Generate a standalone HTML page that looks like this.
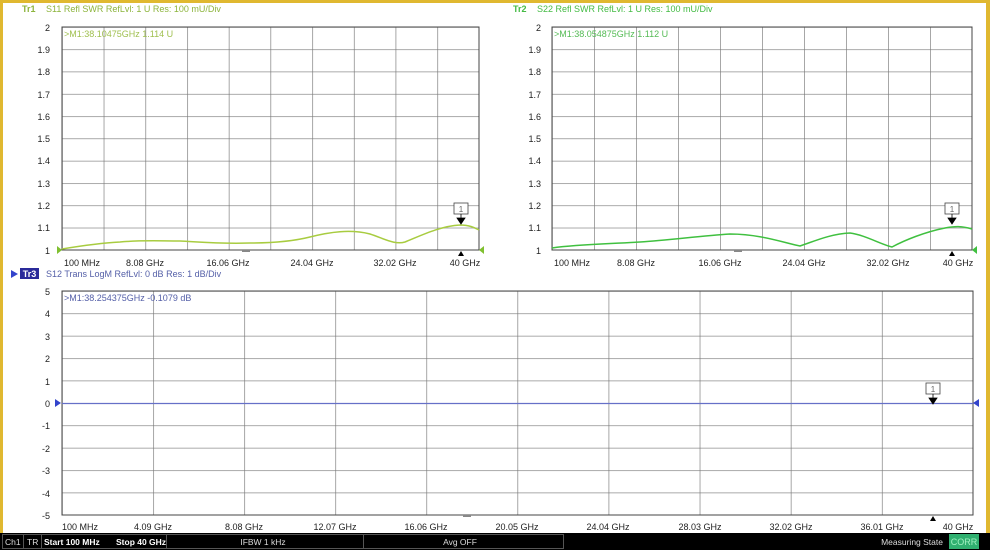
<!DOCTYPE html>
<html><head><meta charset="utf-8"><style>
body{margin:0;width:990px;height:550px;overflow:hidden;background:#fff;font-family:"Liberation Sans",sans-serif}
svg{display:block}
</style></head><body>
<svg width="990" height="550" xmlns="http://www.w3.org/2000/svg" font-family="Liberation Sans, sans-serif" font-size="9">
<defs>
<pattern id="g1" x="62" y="27" width="41.7" height="22.3" patternUnits="userSpaceOnUse"><path d="M0 0H41.7M0 0V22.3" stroke="#777" stroke-width="1.3" fill="none"/></pattern>
<pattern id="g2" x="552" y="27" width="42" height="22.3" patternUnits="userSpaceOnUse"><path d="M0 0H42M0 0V22.3" stroke="#777" stroke-width="1.3" fill="none"/></pattern>
<pattern id="g3" x="62" y="291" width="91.1" height="22.4" patternUnits="userSpaceOnUse"><path d="M0 0H91.1M0 0V22.4" stroke="#777" stroke-width="1.3" fill="none"/></pattern>
</defs>
<rect width="990" height="550" fill="#fff"/>
<rect x="0" y="0" width="990" height="3" fill="#e0b830"/>
<rect x="0" y="0" width="3" height="533" fill="#e0b830"/>
<rect x="986" y="0" width="4" height="533" fill="#e0b830"/>

<text x="22" y="12" fill="#8cb43c" font-weight="bold">Tr1</text>
<text x="46" y="12" fill="#8cb43c">S11 Refl SWR RefLvl: 1  U Res: 100 mU/Div</text>
<rect x="62" y="27" width="417" height="223" fill="url(#g1)" stroke="#444" stroke-width="1"/>
<text x="64" y="37" fill="#a0c050">&gt;M1:38.10475GHz  1.114  U</text>
<g fill="#222" text-anchor="end">
<text x="50" y="31">2</text><text x="50" y="53">1.9</text><text x="50" y="75">1.8</text><text x="50" y="98">1.7</text><text x="50" y="120">1.6</text><text x="50" y="142">1.5</text><text x="50" y="164">1.4</text><text x="50" y="187">1.3</text><text x="50" y="209">1.2</text><text x="50" y="231">1.1</text><text x="50" y="254">1</text>
</g>
<g fill="#222" text-anchor="middle">
<text x="82" y="266">100 MHz</text><text x="145" y="266">8.08 GHz</text><text x="228" y="266">16.06 GHz</text><text x="312" y="266">24.04 GHz</text><text x="395" y="266">32.02 GHz</text><text x="465" y="266">40 GHz</text>
</g>
<path d="M62 249 C80 246 100 243 120 242 C140 240 160 241 180 241 C200 242 220 244 250 243 C270 243 290 242 310 237 C330 232 350 229 370 234 C385 239 395 245 405 242 C420 236 440 226 460 225 C470 225 475 228 479 230" stroke="#a8cc40" stroke-width="1.5" fill="none"/>
<path d="M57 246 L62 250 L57 254 Z" fill="#80c030"/>
<path d="M484 246 L479 250 L484 254 Z" fill="#80c030"/>
<rect x="454" y="203" width="14" height="11" fill="#fff" stroke="#444" stroke-width="0.8"/><text x="461" y="212" text-anchor="middle" font-size="8" fill="#666">1</text>
<path d="M461 214V219M457 218H465L461 224Z" stroke="#000" fill="#000" stroke-width="0.8"/>
<path d="M458 256H464L461 251Z" fill="#000"/>
<rect x="242" y="250" width="8" height="2" fill="#888"/>

<text x="513" y="12" fill="#44bb44" font-weight="bold">Tr2</text>
<text x="537" y="12" fill="#44bb44">S22 Refl SWR RefLvl: 1  U Res: 100 mU/Div</text>
<rect x="552" y="27" width="420" height="223" fill="url(#g2)" stroke="#444" stroke-width="1"/>
<text x="554" y="37" fill="#55bb55">&gt;M1:38.054875GHz  1.112  U</text>
<g fill="#222" text-anchor="end">
<text x="541" y="31">2</text><text x="541" y="53">1.9</text><text x="541" y="75">1.8</text><text x="541" y="98">1.7</text><text x="541" y="120">1.6</text><text x="541" y="142">1.5</text><text x="541" y="164">1.4</text><text x="541" y="187">1.3</text><text x="541" y="209">1.2</text><text x="541" y="231">1.1</text><text x="541" y="254">1</text>
</g>
<g fill="#222" text-anchor="middle">
<text x="572" y="266">100 MHz</text><text x="636" y="266">8.08 GHz</text><text x="720" y="266">16.06 GHz</text><text x="804" y="266">24.04 GHz</text><text x="888" y="266">32.02 GHz</text><text x="958" y="266">40 GHz</text>
</g>
<path d="M552 248 C580 244 610 244 640 242 C670 240 700 236 730 234 C760 234 785 243 800 246 C815 241 830 234 850 233 C865 235 880 244 892 247 C905 240 925 232 945 228 C955 226 962 226 972 229" stroke="#40c040" stroke-width="1.5" fill="none"/>
<path d="M977 246 L972 250 L977 254 Z" fill="#40c040"/>
<rect x="945" y="203" width="14" height="11" fill="#fff" stroke="#444" stroke-width="0.8"/><text x="952" y="212" text-anchor="middle" font-size="8" fill="#666">1</text>
<path d="M952 214V219M948 218H956L952 224Z" stroke="#000" fill="#000" stroke-width="0.8"/>
<path d="M949 256H955L952 251Z" fill="#000"/>
<rect x="734" y="250" width="8" height="2" fill="#888"/>

<path d="M11 270 L18 274 L11 278 Z" fill="#3344cc"/>
<rect x="20" y="268" width="19" height="11" fill="#2a2a9a"/>
<text x="29.5" y="277" text-anchor="middle" fill="#fff" font-weight="bold">Tr3</text>
<text x="46" y="277" fill="#5560a8">S12 Trans LogM RefLvl: 0  dB Res: 1  dB/Div</text>
<rect x="62" y="291" width="911" height="224" fill="url(#g3)" stroke="#444" stroke-width="1"/>
<text x="64" y="301" fill="#5560a8">&gt;M1:38.254375GHz  -0.1079  dB</text>
<g fill="#222" text-anchor="end">
<text x="50" y="295">5</text><text x="50" y="317">4</text><text x="50" y="340">3</text><text x="50" y="362">2</text><text x="50" y="385">1</text><text x="50" y="407">0</text><text x="50" y="429">-1</text><text x="50" y="452">-2</text><text x="50" y="474">-3</text><text x="50" y="497">-4</text><text x="50" y="519">-5</text>
</g>
<g fill="#222" text-anchor="middle">
<text x="80" y="530">100 MHz</text><text x="153" y="530">4.09 GHz</text><text x="244" y="530">8.08 GHz</text><text x="335" y="530">12.07 GHz</text><text x="426" y="530">16.06 GHz</text><text x="517" y="530">20.05 GHz</text><text x="608" y="530">24.04 GHz</text><text x="700" y="530">28.03 GHz</text><text x="791" y="530">32.02 GHz</text><text x="882" y="530">36.01 GHz</text><text x="958" y="530">40 GHz</text>
</g>
<line x1="62" y1="403.5" x2="973" y2="403.5" stroke="#6670c8" stroke-width="1.3"/>
<path d="M55 399 L61 403 L55 407 Z" fill="#3344cc"/>
<path d="M979 399 L973 403 L979 407 Z" fill="#3344cc"/>
<rect x="926" y="383" width="14" height="11" fill="#fff" stroke="#444" stroke-width="0.8"/><text x="933" y="392" text-anchor="middle" font-size="8" fill="#666">1</text>
<path d="M933 394V399M929 398H937L933 404Z" stroke="#000" fill="#000" stroke-width="0.8"/>
<path d="M930 521H936L933 516Z" fill="#000"/>
<rect x="463" y="515" width="8" height="2" fill="#888"/>

<rect x="0" y="533" width="990" height="17" fill="#000"/>
<g fill="none" stroke="#555" stroke-width="1">
<rect x="2.5" y="534.5" width="21" height="14"/><rect x="23.5" y="534.5" width="18" height="14"/><rect x="41.5" y="534.5" width="125" height="14"/><rect x="166.5" y="534.5" width="197" height="14"/><rect x="363.5" y="534.5" width="200" height="14"/>
</g>
<g fill="#ddd" font-size="8.5">
<text x="5" y="545">Ch1</text><text x="27" y="545">TR</text>
<text x="44" y="545" font-weight="bold" fill="#fff">Start 100 MHz</text>
<text x="116" y="545" font-weight="bold" fill="#fff">Stop 40 GHz</text>
<text x="263" y="545" text-anchor="middle">IFBW 1 kHz</text>
<text x="460" y="545" text-anchor="middle">Avg OFF</text>
<text x="943" y="545" text-anchor="end">Measuring State</text>
</g>
<rect x="949" y="534" width="30" height="15" fill="#30b070"/>
<text x="964" y="545" text-anchor="middle" fill="#a0f0c0" font-size="9">CORR</text>
</svg>
</body></html>
